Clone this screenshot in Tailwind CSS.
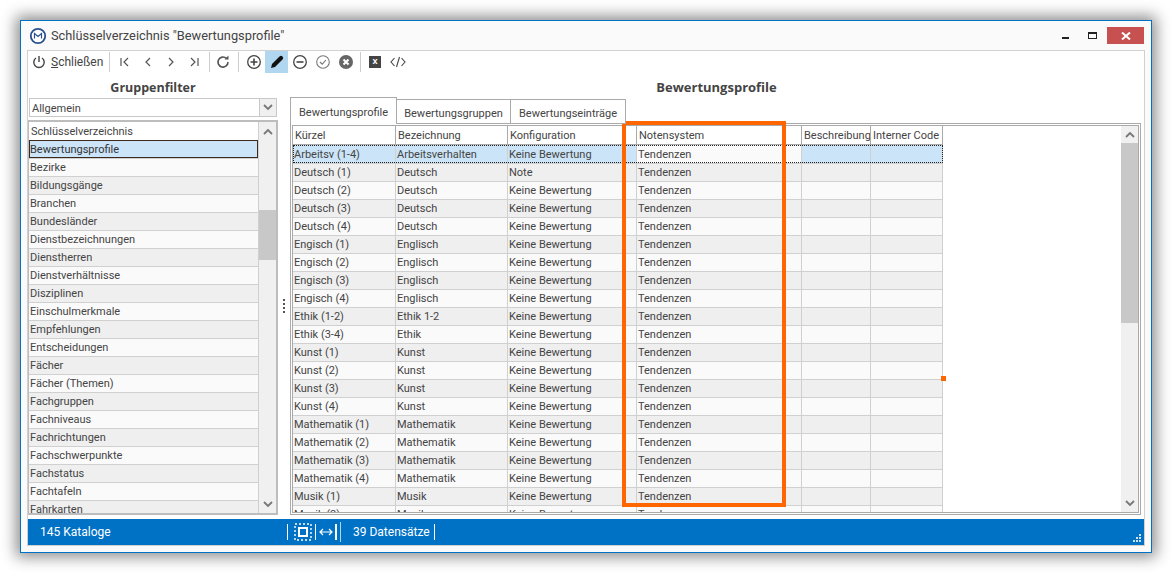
<!DOCTYPE html>
<html lang="de">
<head>
<meta charset="UTF-8">
<title>Schlüsselverzeichnis</title>
<script src="https://cdn.jsdelivr.net/npm/@tailwindcss/browser@4"></script>
</head>
<body class="bg-white h-[573px] w-[1172px] overflow-hidden pt-[20px] pl-[20px] font-['Roboto',sans-serif] text-[#444] text-[11px]">
<div class="relative w-[1132px] h-[533px] border border-[#0072c6] bg-[#fafafa] shadow-[0_0_14px_4px_rgba(0,0,0,0.45)] flex flex-col px-[6px] pb-[6px]">

  <!-- title bar -->
  <div class="h-[29px] flex items-center shrink-0">
    <svg width="18" height="18" viewBox="0 0 18 18" class="ml-[2px] mr-[4px]"><circle cx="9" cy="9" r="7.2" fill="#fff" stroke="#2a4f8f" stroke-width="1.8"/><path d="M5.5 11.5V6.5L9 9.5l3.5-3v5" fill="none" stroke="#2a4f8f" stroke-width="1.2"/></svg>
    <span class="text-[12.8px] text-[#444] whitespace-nowrap">Schlüsselverzeichnis "Bewertungsprofile"</span>
    <div class="ml-auto flex items-start h-full">
      <div class="w-[7px] h-[2px] bg-[#222] mt-[16px] mr-[19px]"></div>
      <div class="w-[9px] h-[7px] border border-t-2 border-[#222] mt-[11px] mr-[10px]"></div>
      <div class="w-[37px] h-[17px] bg-[#c75050] flex items-center justify-center mt-[6px] mr-px">
        <svg width="10" height="8" viewBox="0 0 10 8"><path d="M1 0.5L9 7.5M9 0.5L1 7.5" stroke="#fff" stroke-width="2"/></svg>
      </div>
    </div>
  </div>

  <!-- main panel -->
  <div class="flex-1 min-h-0 border border-[#d0d0d0] bg-white flex flex-col">
    <!-- toolbar -->
    <div class="h-[22px] shrink-0 flex items-center pl-[3px] text-[#555]">
      <svg width="16" height="16" viewBox="0 0 16 16" fill="none" stroke="#444" stroke-width="1.4"><path d="M5 4a5.2 5.2 0 1 0 6 0M8 2v6"/></svg>
      <span class="ml-[4px] w-[51px] text-[12px] text-[#444] whitespace-nowrap"><u>S</u>chließen</span>
      <div class="w-px h-[20px] bg-[#ccc] ml-[7px] mr-[3px]"></div>
      <div class="w-[23px] flex justify-center"><svg width="12" height="10" viewBox="0 0 12 10" fill="none" stroke="#555" stroke-width="1.2"><path d="M2 1v8M9 1L5 5l4 4"/></svg></div>
      <div class="w-[23px] flex justify-center"><svg width="10" height="10" viewBox="0 0 10 10" fill="none" stroke="#555" stroke-width="1.2"><path d="M7 1L3 5l4 4"/></svg></div>
      <div class="w-[23px] flex justify-center"><svg width="10" height="10" viewBox="0 0 10 10" fill="none" stroke="#555" stroke-width="1.2"><path d="M3 1l4 4-4 4"/></svg></div>
      <div class="w-[23px] flex justify-center"><svg width="12" height="10" viewBox="0 0 12 10" fill="none" stroke="#555" stroke-width="1.2"><path d="M3 1l4 4-4 4M10 1v8"/></svg></div>
      <div class="w-px h-[20px] bg-[#ccc] ml-[4px] mr-[5px]"></div>
      <svg width="16" height="16" viewBox="0 0 16 16" fill="none" stroke="#555" stroke-width="1.6"><path d="M13 8a5 5 0 1 1-1.6-3.6"/><path d="M13.5 1.5v4h-4" fill="#555" stroke="none"/></svg>
      <div class="w-px h-[20px] bg-[#ccc] ml-[7px] mr-[3px]"></div>
      <div class="w-[23px] h-[22px] flex justify-center items-center"><svg width="16" height="16" viewBox="0 0 16 16" fill="none" stroke="#444" stroke-width="1.3"><circle cx="8" cy="8" r="6.3"/><path d="M8 4.5v7M4.5 8h7" stroke-width="1.6"/></svg></div>
      <div class="w-[23px] h-[22px] bg-[#b1d6f0] flex justify-center items-center"><svg width="16" height="16" viewBox="0 0 16 16"><path d="M2 14l1-4 7.5-7.5a1.5 1.5 0 0 1 3 3L6 13z" fill="#111"/></svg></div>
      <div class="w-[23px] h-[22px] flex justify-center items-center"><svg width="16" height="16" viewBox="0 0 16 16" fill="none" stroke="#444" stroke-width="1.3"><circle cx="8" cy="8" r="6.3"/><path d="M4.5 8h7" stroke-width="1.6"/></svg></div>
      <div class="w-[23px] h-[22px] flex justify-center items-center"><svg width="16" height="16" viewBox="0 0 16 16" fill="none" stroke="#777" stroke-width="1.1"><circle cx="8" cy="8" r="6.3"/><path d="M5 8l2.2 2.2L11 6"/></svg></div>
      <div class="w-[23px] h-[22px] flex justify-center items-center"><svg width="16" height="16" viewBox="0 0 16 16"><circle cx="8" cy="8" r="7" fill="#666"/><path d="M5.5 5.5l5 5M10.5 5.5l-5 5" stroke="#fff" stroke-width="2"/></svg></div>
      <div class="w-px h-[20px] bg-[#ccc] ml-[3px] mr-[8px]"></div>
      <div class="w-[12px] h-[12px] bg-[#444] text-white text-[8px] font-bold flex items-center justify-center leading-none">X</div>
      <svg width="16" height="12" viewBox="0 0 16 12" fill="none" stroke="#444" stroke-width="1.1" class="ml-[9px]"><path d="M4.5 2L1 6l3.5 4M11.5 2L15 6l-3.5 4M9.5 1L6.5 11"/></svg>
    </div>

    <!-- content -->
    <div class="flex-1 min-h-0 flex pr-[3px] pb-[4px]">
      <!-- left column -->
      <div class="w-[250px] shrink-0 flex flex-col">
        <div class="h-[25px] shrink-0 pt-[5px] flex items-center justify-center font-bold font-['Open_Sans',sans-serif] text-[12.5px] text-[#444]">Gruppenfilter</div>
        <div class="h-[19px] shrink-0 w-[248px] ml-px border border-[#c8c8c8] flex items-center justify-between">
          <span class="pl-[2px] pt-[3px] text-[#444]">Allgemein</span>
          <div class="w-[17px] h-full bg-[#f0f0f0] border-l border-[#c8c8c8] flex items-center justify-center">
            <svg width="10" height="7" viewBox="0 0 10 7" fill="none" stroke="#777" stroke-width="1.8"><path d="M1 1l4 4 4-4"/></svg>
          </div>
        </div>
        <div class="mt-[3px] flex-1 min-h-0 border-2 border-l border-[#bdbdbd] flex overflow-hidden">
          <div id="list" class="flex-1 min-w-0 overflow-hidden border-r border-[#d0d0d0]"></div>
          <div class="w-[17px] shrink-0 bg-[#f0f0f0] flex flex-col">
            <div class="h-[18px] flex items-center justify-center"><svg width="10" height="7" viewBox="0 0 10 7" fill="none" stroke="#777" stroke-width="1.8"><path d="M1 6l4-4 4 4"/></svg></div>
            <div class="h-[70px]"></div>
            <div class="h-[50px] bg-[#c8c8c8]"></div>
            <div class="flex-1"></div>
            <div class="h-[18px] flex items-center justify-center"><svg width="10" height="7" viewBox="0 0 10 7" fill="none" stroke="#777" stroke-width="1.8"><path d="M1 1l4 4 4-4"/></svg></div>
          </div>
        </div>
      </div>

      <!-- splitter -->
      <div class="w-[12px] shrink-0 flex flex-col items-center justify-center gap-[2px] pt-[24px]">
        <i class="w-[2px] h-[2px] bg-[#555]"></i><i class="w-[2px] h-[2px] bg-[#555]"></i><i class="w-[2px] h-[2px] bg-[#555]"></i><i class="w-[2px] h-[2px] bg-[#555]"></i>
      </div>

      <!-- right column -->
      <div class="flex-1 min-w-0 flex flex-col">
        <div class="h-[24px] shrink-0 pt-[6px] pl-[2px] flex items-center justify-center font-bold font-['Open_Sans',sans-serif] text-[13px] text-[#444]">Bewertungsprofile</div>
        <div class="h-[27px] shrink-0 flex items-end relative z-10 -mb-px">
          <div class="w-[107px] h-[27px] pt-[5px] border border-b-0 border-[#aaa] bg-white flex items-center justify-center">Bewertungsprofile</div>
          <div class="w-[114px] h-[25px] pt-[6px] border border-l-0 border-[#aaa] bg-white flex items-center justify-center">Bewertungsgruppen</div>
          <div class="w-[115px] h-[25px] pt-[6px] border border-l-0 border-[#aaa] bg-white flex items-center justify-center">Bewertungseinträge</div>
        </div>
        <div class="flex-1 min-h-0 border border-[#aaa] p-px flex overflow-hidden">
          <div class="flex-1 min-w-0 flex border border-[#aaa] overflow-hidden">
            <div class="flex-1 min-w-0 overflow-hidden">
              <div id="grid" class="w-[650px]"></div>
            </div>
            <div class="w-[17px] shrink-0 bg-[#f0f0f0] flex flex-col">
              <div class="h-[17px] flex items-center justify-center"><svg width="10" height="7" viewBox="0 0 10 7" fill="none" stroke="#777" stroke-width="1.8"><path d="M1 6l4-4 4 4"/></svg></div>
              <div class="h-[180px] bg-[#c8c8c8]"></div>
              <div class="flex-1"></div>
              <div class="h-[18px] flex items-center justify-center"><svg width="10" height="7" viewBox="0 0 10 7" fill="none" stroke="#777" stroke-width="1.8"><path d="M1 1l4 4 4-4"/></svg></div>
            </div>
          </div>
        </div>
      </div>
    </div>

    <!-- status bar -->
    <div class="h-[26px] shrink-0 bg-[#0072c6] text-white text-[12px] flex items-center relative">
      <span class="ml-[12px] w-[247px]">145 Kataloge</span>
      <div class="w-px h-[16px] bg-white"></div>
      <svg width="18" height="18" viewBox="0 0 18 18" fill="none" stroke="#fff" class="ml-[6px]"><rect x="1" y="1" width="16" height="16" stroke-dasharray="2 2" stroke-width="1.4"/><rect x="5" y="5" width="8" height="8" stroke-width="2"/></svg>
      <div class="w-px h-[16px] bg-white ml-[3px]"></div>
      <svg width="14" height="10" viewBox="0 0 14 10" fill="none" stroke="#fff" stroke-width="1.2" class="ml-[3px]"><path d="M1 5h12M4 2L1 5l3 3M10 2l3 3-3 3"/></svg>
      <div class="w-[2px] h-[16px] bg-white ml-[2px]"></div>
      <div class="w-px h-[20px] bg-white/70 ml-[3px]"></div>
      <span class="ml-[12px] w-[72px] whitespace-nowrap">39 Datensätze</span>
      <div class="w-px h-[16px] bg-white ml-[9px]"></div>
      <svg width="9" height="9" viewBox="0 0 9 9" fill="#cfe3f3" class="absolute right-[2px] bottom-[2px]"><rect x="6" y="0" width="2" height="2"/><rect x="3" y="3" width="2" height="2"/><rect x="6" y="3" width="2" height="2"/><rect x="0" y="6" width="2" height="2"/><rect x="3" y="6" width="2" height="2"/><rect x="6" y="6" width="2" height="2"/></svg>
    </div>
  </div>

  <!-- annotation drawn over the grid -->
  <div class="absolute left-[601px] top-[100px] w-[164px] h-[386px] border-[4px] border-[#ff6600]"></div>
  <div class="absolute left-[920px] top-[355px] w-[5px] h-[5px] bg-[#ff6600]"></div>
</div>

<script>
  const kataloge = ["Schlüsselverzeichnis","Bewertungsprofile","Bezirke","Bildungsgänge","Branchen","Bundesländer","Dienstbezeichnungen","Dienstherren","Dienstverhältnisse","Disziplinen","Einschulmerkmale","Empfehlungen","Entscheidungen","Fächer","Fächer (Themen)","Fachgruppen","Fachniveaus","Fachrichtungen","Fachschwerpunkte","Fachstatus","Fachtafeln","Fahrkarten"];
  document.getElementById("list").innerHTML = kataloge.map((name, i) => {
    if (i === 0) return `<div class="h-[18px] bg-white flex items-center pl-[2px] pt-[3px] whitespace-nowrap">${name}</div>`;
    if (i === 1) return `<div class="h-[18px] bg-[#cce4f7] border border-[#3c2a1e] flex items-center pt-[3px] text-[#333] whitespace-nowrap">${name}</div>`;
    const bg = i % 2 ? "bg-[#efefef]" : "bg-[#fafafa]";
    return `<div class="h-[18px] ${bg} border-t border-[#d0d0d0] flex items-center pl-[1px] pt-[2px] whitespace-nowrap">${name}</div>`;
  }).join("");

  const rows = [["Arbeitsv (1-4)","Arbeitsverhalten","Keine Bewertung"],["Deutsch (1)","Deutsch","Note"],["Deutsch (2)","Deutsch","Keine Bewertung"],["Deutsch (3)","Deutsch","Keine Bewertung"],["Deutsch (4)","Deutsch","Keine Bewertung"],["Engisch (1)","Englisch","Keine Bewertung"],["Engisch (2)","Englisch","Keine Bewertung"],["Engisch (3)","Englisch","Keine Bewertung"],["Engisch (4)","Englisch","Keine Bewertung"],["Ethik (1-2)","Ethik 1-2","Keine Bewertung"],["Ethik (3-4)","Ethik","Keine Bewertung"],["Kunst (1)","Kunst","Keine Bewertung"],["Kunst (2)","Kunst","Keine Bewertung"],["Kunst (3)","Kunst","Keine Bewertung"],["Kunst (4)","Kunst","Keine Bewertung"],["Mathematik (1)","Mathematik","Keine Bewertung"],["Mathematik (2)","Mathematik","Keine Bewertung"],["Mathematik (3)","Mathematik","Keine Bewertung"],["Mathematik (4)","Mathematik","Keine Bewertung"],["Musik (1)","Musik","Keine Bewertung"],["Musik (2)","Musik","Keine Bewertung"]];
  const widths = ["w-[103px]","w-[112px]","w-[129px]","w-[165px]","w-[69px]","w-[72px]"];
  const head = ["Kürzel","Bezeichnung","Konfiguration","Notensystem","Beschreibung","Interner Code"];
  let html = `<div class="flex h-[19px]">` + head.map((h, c) => `<div class="${widths[c]} shrink-0 bg-white border-r border-b border-[#aaa] flex items-center pl-[2px] pt-[3px] whitespace-nowrap overflow-hidden">${h}</div>`).join("") + `</div>`;
  rows.forEach((r, i) => {
    const cells = [...r, "Tendenzen", "", ""];
    if (i === 0) {
      html += `<div class="flex h-[18px] bg-[#cce4f7] outline-1 outline-dotted outline-[#222] -outline-offset-1">` + cells.map((t, c) => `<div class="${widths[c]} shrink-0 ${c === 3 ? "bg-[#fafafa]" : ""} border-r border-[#d0d0d0] flex items-center pl-[1px] pt-[3px] whitespace-nowrap">${t}</div>`).join("") + `</div>`;
    } else {
      const bg = i % 2 ? "bg-[#efefef]" : "bg-[#fafafa]";
      html += `<div class="flex h-[18px] ${bg}">` + cells.map((t, c) => `<div class="${widths[c]} shrink-0 border-r border-t border-[#d0d0d0] flex items-center pl-[1px] pt-[2px] whitespace-nowrap">${t}</div>`).join("") + `</div>`;
    }
  });
  document.getElementById("grid").innerHTML = html;
</script>
</body>
</html>
